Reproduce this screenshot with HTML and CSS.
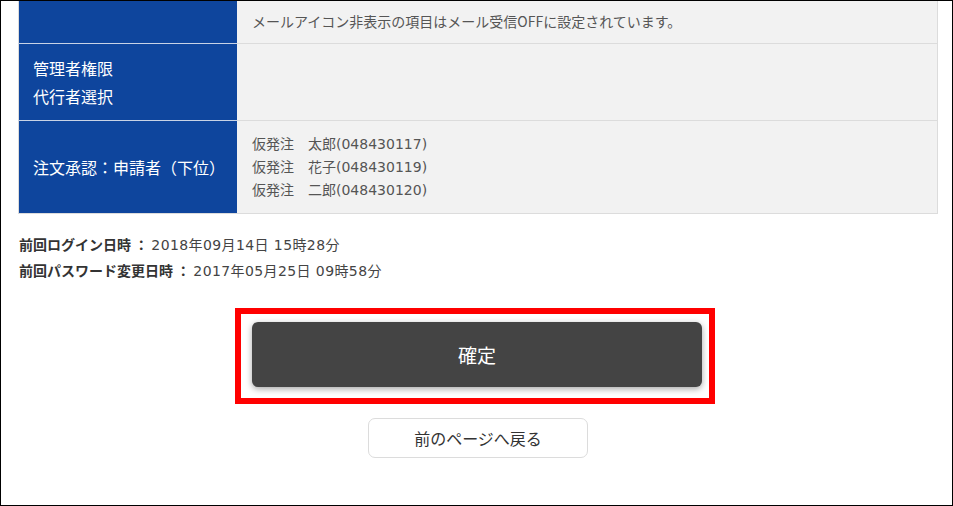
FILE: index.html
```html
<!DOCTYPE html>
<html lang="ja">
<head>
<meta charset="utf-8">
<title>確認</title>
<link rel="stylesheet" href="styles.css">
</head>
<body>
<div class="frame">
  <div class="content">
    <table class="info-table">
      <tr class="row-first">
        <th></th>
        <td>メールアイコン非表示の項目はメール受信OFFに設定されています。</td>
      </tr>
      <tr class="row-admin">
        <th>管理者権限<br>代行者選択</th>
        <td></td>
      </tr>
      <tr class="row-approve">
        <th>注文承認：申請者（下位）</th>
        <td>仮発注　太郎(048430117)<br>仮発注　花子(048430119)<br>仮発注　二郎(048430120)</td>
      </tr>
    </table>

    <div class="login-info">
      <p><span class="lbl">前回ログイン日時 ：</span> <span class="val">2018年09月14日 15時28分</span></p>
      <p><span class="lbl">前回パスワード変更日時 ：</span> <span class="val">2017年05月25日 09時58分</span></p>
    </div>

    <div class="actions">
      <div class="highlight">
        <button class="btn-confirm" type="button">確定</button>
      </div>
      <button class="btn-back" type="button">前のページへ戻る</button>
    </div>
  </div>
</div>
</body>
</html>
```

FILE: styles.css
```css
html, body {
  margin: 0;
  padding: 0;
  background: #fff;
}

body {
  font-family: "Noto Sans CJK JP", "Noto Sans", sans-serif;
  color: #444;
}

.frame {
  width: 953px;
  height: 506px;
  box-sizing: border-box;
  border: 1px solid #000;
  overflow: hidden;
}

.content {
  width: 920px;
  margin-left: 17px;
}

.info-table {
  width: 920px;
  border-collapse: collapse;
  border: 1px solid #dcdcdc;
  border-top: none;
}

.info-table th,
.info-table td {
  border-top: 1px solid #dcdcdc;
  vertical-align: middle;
}

.info-table tr.row-first th,
.info-table tr.row-first td {
  border-top: none;
}

.info-table th {
  width: 204px;
  background: #0e459d;
  color: #fff;
  font-weight: normal;
  font-size: 16px;
  line-height: 28px;
  text-align: left;
  padding: 0 0 0 14px;
  border-top-color: #c8d3e6;
}

.info-table td {
  background: #f2f2f2;
  color: #555;
  font-family: "DejaVu Sans", "Noto Sans CJK JP", sans-serif;
  font-size: 14px;
  line-height: 23px;
  padding: 0 0 0 15px;
}

.row-first th {
  height: 42px;
}

.row-first td {
  height: 40px;
  font-family: "Noto Sans CJK JP", "Noto Sans", sans-serif;
  padding-bottom: 2px;
}

.row-admin th {
  height: 56px;
  padding-top: 10px;
  padding-bottom: 10px;
}

.row-approve th,
.row-approve td {
  height: 70px;
  padding-top: 11px;
  padding-bottom: 11px;
}

.login-info {
  margin-top: 18px;
  padding-left: 1px;
}

.login-info p {
  margin: 0;
  font-size: 14px;
  line-height: 25px;
  color: #444;
}

.login-info .lbl {
  font-weight: bold;
  color: #333;
}

.login-info .val {
  font-family: "DejaVu Sans", "Noto Sans CJK JP", sans-serif;
  letter-spacing: 0.4px;
}

.actions {
  display: flex;
  flex-direction: column;
  align-items: center;
  margin-top: 24px;
}

.highlight {
  box-sizing: border-box;
  width: 480px;
  height: 96px;
  border: 6px solid #ff0000;
  padding: 7px 7px 10px 10px;
  margin-left: -6px;
}

.btn-confirm {
  display: block;
  width: 450px;
  height: 65px;
  border: none;
  border-radius: 6px;
  background: #444;
  color: #fff;
  font-family: "Noto Sans CJK JP", "Noto Sans", sans-serif;
  font-size: 19px;
  box-shadow: 0 2px 6px rgba(0, 0, 0, 0.35);
  margin-left: 1px;
  margin-top: 1px;
}

.btn-back {
  margin-top: 14px;
  width: 220px;
  height: 40px;
  background: #fff;
  border: 1px solid #dcdcdc;
  border-radius: 7px;
  color: #333;
  font-family: "Noto Sans CJK JP", "Noto Sans", sans-serif;
  font-size: 16px;
}
```
